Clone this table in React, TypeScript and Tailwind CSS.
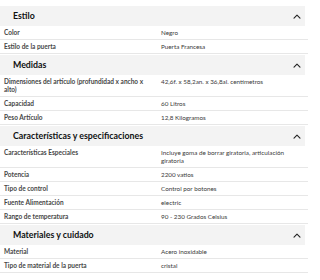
import * as React from "react";

type Row = { label: React.ReactNode; value: React.ReactNode };
type Section = { title: string; rows: Row[] };

const sections: Section[] = [
  {
    title: "Estilo",
    rows: [
      { label: "Color", value: "Negro" },
      { label: "Estilo de la puerta", value: "Puerta Francesa" },
    ],
  },
  {
    title: "Medidas",
    rows: [
      {
        label: (
          <>
            Dimensiones del artículo (profundidad x ancho x
            <br />
            alto)
          </>
        ),
        value: "42,6f. x 58,2an. x 36,8al. centímetros",
      },
      { label: "Capacidad", value: "60 Litros" },
      { label: "Peso Artículo", value: "12,8 Kilogramos" },
    ],
  },
  {
    title: "Características y especificaciones",
    rows: [
      {
        label: "Características Especiales",
        value: (
          <>
            Incluye goma de borrar giratoria, articulación
            <br />
            giratoria
          </>
        ),
      },
      { label: "Potencia", value: "2200 vatios" },
      { label: "Tipo de control", value: "Control por botones" },
      { label: "Fuente Alimentación", value: "electric" },
      { label: "Rango de temperatura", value: "90 - 230 Grados Celsius" },
    ],
  },
  {
    title: "Materiales y cuidado",
    rows: [
      { label: "Material", value: "Acero inoxidable" },
      { label: "Tipo de material de la puerta", value: "cristal" },
    ],
  },
];

function Chevron() {
  return (
    <svg width="8" height="5" viewBox="0 0 8 5" fill="none">
      <polyline
        points="1,4.2 4,1.2 7,4.2"
        stroke="#222"
        strokeWidth="1.1"
        strokeLinecap="round"
        strokeLinejoin="round"
      />
    </svg>
  );
}

export default function App() {
  return (
    <div
      className="h-[280px] w-[320px] overflow-hidden bg-white pt-[6px] text-[#0f1111]"
      style={{ fontFamily: "Lato, 'Liberation Sans', sans-serif" }}
    >
      <div className="flex w-[308px] flex-col gap-px">
        {sections.map((s) => (
          <div key={s.title}>
            <div className="flex h-[20px] w-[305px] items-center justify-between bg-[#f3f3f3] pl-[13px] pr-[4px]">
              <span className="text-[8.8px] font-bold">{s.title}</span>
              <Chevron />
            </div>
            {s.rows.map((r, i) => (
              <div
                key={i}
                className="flex border-b border-[#e7e7e7] py-[2.5px] leading-[8px]"
              >
                <div className="w-[161px] shrink-0 pl-[4px] text-[6.5px] font-bold text-[#474747]">
                  {r.label}
                </div>
                <div className="flex-1 text-[6.3px] text-[#3a3a3a]">{r.value}</div>
              </div>
            ))}
          </div>
        ))}
      </div>
    </div>
  );
}
